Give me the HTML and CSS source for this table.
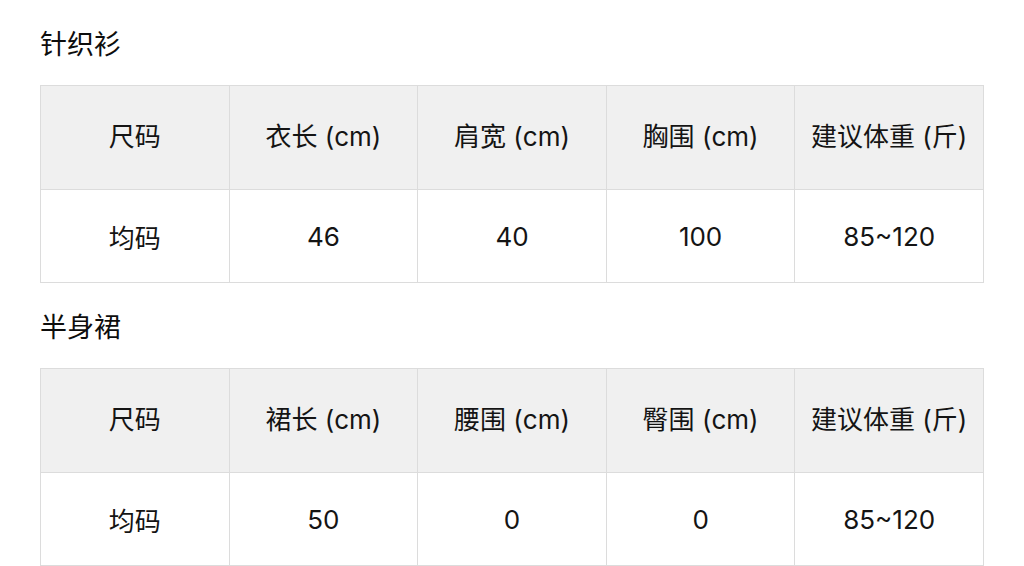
FILE: index.html
```html
<!DOCTYPE html>
<html lang="zh">
<head>
<meta charset="utf-8">
<link rel="stylesheet" href="styles.css">
</head>
<body>
<section class="block">
  <h3 class="title">针织衫</h3>
  <table class="size-table">
    <tr class="head">
      <th>尺码</th><th>衣长 (cm)</th><th>肩宽 (cm)</th><th>胸围 (cm)</th><th>建议体重 (斤)</th>
    </tr>
    <tr class="row">
      <td>均码</td><td>46</td><td>40</td><td>100</td><td>85~120</td>
    </tr>
  </table>
</section>
<section class="block">
  <h3 class="title">半身裙</h3>
  <table class="size-table">
    <tr class="head">
      <th>尺码</th><th>裙长 (cm)</th><th>腰围 (cm)</th><th>臀围 (cm)</th><th>建议体重 (斤)</th>
    </tr>
    <tr class="row">
      <td>均码</td><td>50</td><td>0</td><td>0</td><td>85~120</td>
    </tr>
  </table>
</section>
</body>
</html>
```
FILE: styles.css
```css
html, body {
  margin: 0;
  padding: 0;
  background: #ffffff;
}
body {
  padding: 0 40px;
  font-family: Inter, "Noto Sans CJK SC", sans-serif;
  color: #111;
}
.title {
  margin: 0;
  height: 85px;
  display: flex;
  align-items: center;
  font-size: 27px;
  font-weight: 400;
  color: #0d0d0d;
}
.size-table {
  width: 944px;
  border-collapse: collapse;
  table-layout: fixed;
}
.size-table th,
.size-table td {
  border: 1px solid #dcdcdc;
  text-align: center;
  vertical-align: middle;
  font-size: 26px;
  font-weight: 400;
  color: #141414;
  padding: 0;
}
.size-table .head th {
  background: #f0f0f0;
  height: 97px;
  padding-bottom: 6px;
}
.size-table .row td {
  background: #ffffff;
  height: 92px;
}
```
